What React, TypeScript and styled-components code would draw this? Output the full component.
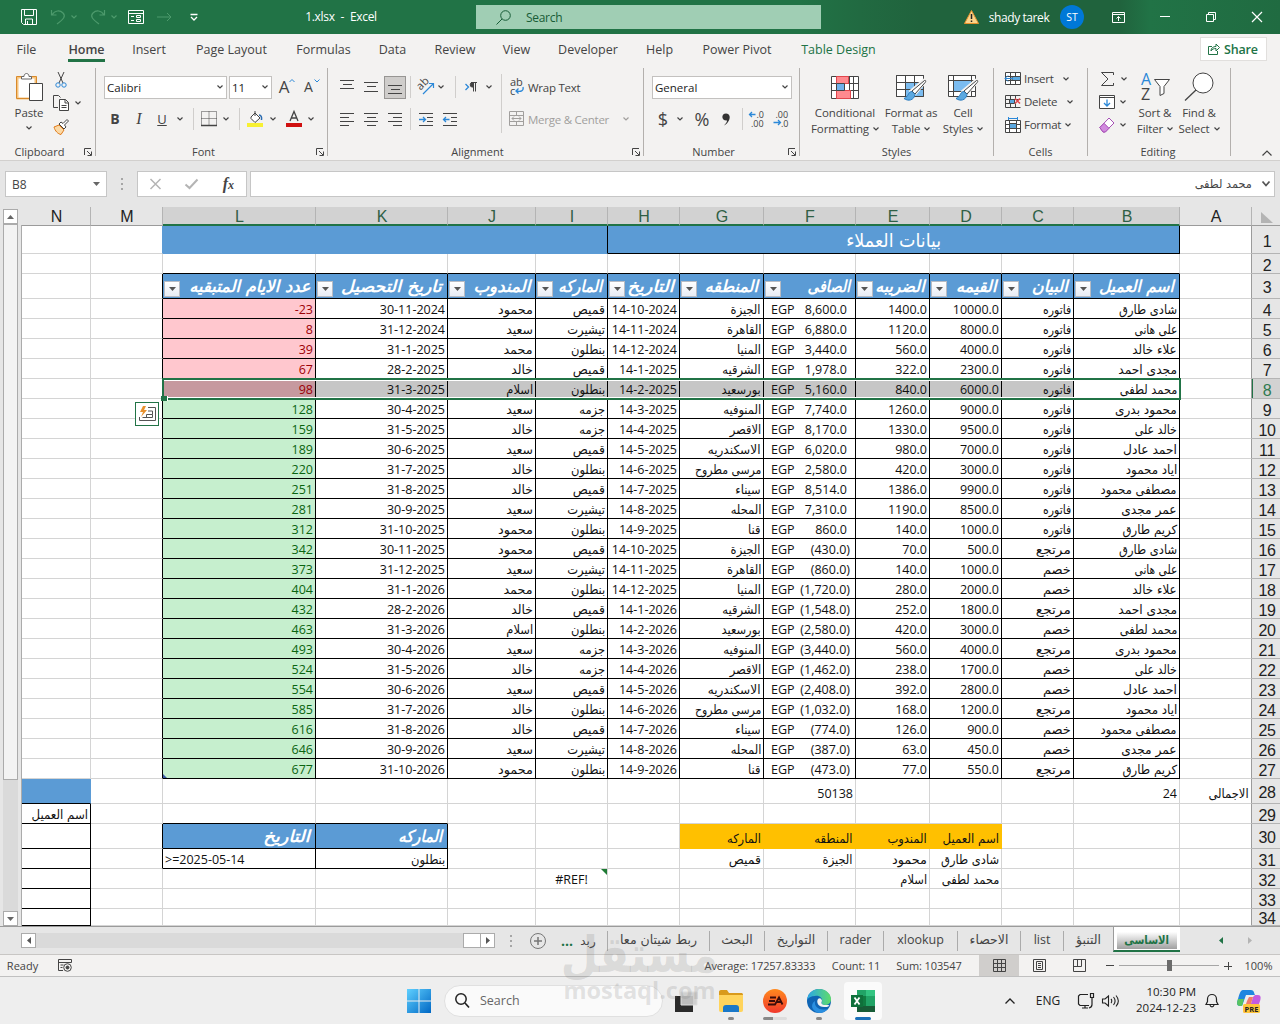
import React from "react";
import styled, { createGlobalStyle, css } from "styled-components";

const GlobalStyle = createGlobalStyle`
  * {
    box-sizing: border-box;
  }
  body {
    margin: 0;
    overflow: hidden;
    background: #e6e6e6;
    color: #444;
    font-family: "Open Sans", "DejaVu Sans", sans-serif;
    font-size: 12px;
  }
  svg {
    display: block;
    flex: none;
    overflow: visible;
  }
`;

const Window = styled.div`
  width: 1280px;
  height: 1024px;
  display: flex;
  flex-direction: column;
  position: relative;
  overflow: hidden;
`;

/* shared pieces */

const Slot = styled.div<{ $w?: number; $ml?: number }>`
  display: flex;
  align-items: center;
  justify-content: center;
  flex: none;
  white-space: nowrap;
  width: ${({ $w }) => ($w ? `${$w}px` : "auto")};
  margin-left: ${({ $ml = 0 }) => $ml}px;
`;

const Arabic = styled.span<{ $x?: number }>`
  display: inline-block;
  direction: rtl;
  font-family: "DejaVu Sans", sans-serif;
  transform: scaleX(${({ $x = 0.92 }) => $x});
  transform-origin: right center;
`;

const Ico = ({ w = 16, h = 16, children, c = "#444" }: any) => (
  <svg
    width={w}
    height={h}
    viewBox={`0 0 ${w} ${h}`}
    fill="none"
    stroke={c}
    strokeWidth="1"
  >
    {children}
  </svg>
);

const Chevron = ({ c = "#444" }: { c?: string }) => (
  <Ico w={6} h={4} c={c}>
    <path d="M.5.5 3 3 5.5.5" strokeWidth="1.2" />
  </Ico>
);

/* title bar */

const TitleBar = styled.header`
  height: 34px;
  flex: none;
  display: flex;
  align-items: center;
  color: #fff;
  background: linear-gradient(
    90deg,
    #217346 0,
    #217346 800px,
    #216a41 860px,
    #20633d 920px,
    #20633d 1120px,
    #217346 1150px,
    #206b41 1280px
  );
`;

const FileName = styled(Slot)`
  font-size: 12px;
  word-spacing: 3px;
  letter-spacing: -0.3px;
  padding-bottom: 2px;
`;

const SearchBox = styled.div`
  width: 345px;
  height: 24px;
  margin-left: 99px;
  padding-left: 20px;
  display: flex;
  align-items: center;
  gap: 15px;
  color: #185c37;
  letter-spacing: -0.3px;
  background: #a0ceb4;
`;

const UserName = styled(Slot)`
  letter-spacing: -0.4px;
`;

const Avatar = styled.div`
  width: 24px;
  height: 24px;
  margin-left: 11px;
  border-radius: 50%;
  background: #0078d7;
  font-size: 10.5px;
  display: flex;
  align-items: center;
  justify-content: center;
`;

const Title = () => (
  <TitleBar>
    <Slot $w={16} $ml={21}>
      <Ico c="#fff">
        <path d="M.5.5h15v15h-13l-2-2zM3.5.5v6h9v-6M4.5 15v-5h7v5M6.500 12v3" />
      </Ico>
    </Slot>
    <Slot $w={15} $ml={14}>
      <Ico w={15} c="#4d9a6c">
        <path d="M.5 1v5h5M1 6C4 1 9 1 12 4s1 6-6 11" strokeWidth="1.2" />
      </Ico>
    </Slot>
    <Slot $w={6} $ml={5}>
      <Chevron c="#4d9a6c" />
    </Slot>
    <Slot $w={15} $ml={13}>
      <Ico w={15} c="#4d9a6c">
        <path d="M14.5 1v5h-5M14 6C11 1 6 1 3 4S2 10 9 15" strokeWidth="1.2" />
      </Ico>
    </Slot>
    <Slot $w={6} $ml={6}>
      <Chevron c="#4d9a6c" />
    </Slot>
    <Slot $w={16} $ml={11}>
      <Ico h={14} c="#fff">
        <path d="M.5.5h15v13H.5zM.5 3.500h15M3 6.500h3M3 10.500h3M8.500 5.500h4v2h-4zM8.500 9.500h4v2h-4z" />
      </Ico>
    </Slot>
    <Slot $w={15} $ml={13}>
      <Ico w={15} h={10} c="#4d9a6c">
        <path d="M0 5h14M10 1l4 4-4 4" />
      </Ico>
    </Slot>
    <Slot $w={8} $ml={18}>
      <Ico w={8} h={7} c="#fff">
        <path d="M.5.5h7M1 3l3 3 3-3" strokeWidth="1.3" />
      </Ico>
    </Slot>
    <FileName $w={72} $ml={107}>
      1.xlsx - Excel
    </FileName>
    <SearchBox>
      <Ico w={15} h={15} c="#185c37">
        <circle cx="9.5" cy="5.5" r="4.8" />
        <path d="M6 9 .5 14.5" />
      </Ico>
      Search
    </SearchBox>
    <Slot $w={15} $ml={143}>
      <Ico w={15} h={14}>
        <path d="M7.5.5 14.5 13.5H.5z" fill="#fcd48a" stroke="#e8912d" />
        <path d="M7.5 4v5M7.5 10.5v1.5" stroke="#222" strokeWidth="1.5" />
      </Ico>
    </Slot>
    <UserName $w={60} $ml={10}>
      shady tarek
    </UserName>
    <Avatar>ST</Avatar>
    <Slot $w={13} $ml={28}>
      <Ico w={13} h={11} c="#fff">
        <path d="M.5.5h12v10H.5zM.5 2.500h12M6.500 9V4.500M4.500 6.500l2-2 2 2" />
      </Ico>
    </Slot>
    <Slot $w={10} $ml={35}>
      <Ico w={10} h={3} c="#fff">
        <path d="M0 .5h10" />
      </Ico>
    </Slot>
    <Slot $w={10} $ml={36}>
      <Ico w={10} h={10} c="#fff">
        <path d="M.5 2.500h7v7h-7zM2.500 2.500v-2h7v7h-2" />
      </Ico>
    </Slot>
    <Slot $w={10} $ml={36}>
      <Ico w={10} h={10} c="#fff">
        <path d="M0 0l10 10M10 0 0 10" strokeWidth="1.2" />
      </Ico>
    </Slot>
  </TitleBar>
);

/* ribbon tabs */

const TabStrip = styled.nav`
  height: 33px;
  flex: none;
  display: flex;
  background: #f3f2f1;
`;

const Tab = styled(Slot)<{ $active?: boolean; $green?: boolean }>`
  height: 28px;
  padding-top: 3px;
  font-size: 12.5px;
  color: ${({ $green }) => ($green ? "#217346" : "#444")};
  ${({ $active }) =>
    $active &&
    css`
      font-weight: 600;
      border-bottom: 3px solid #217346;
      padding-top: 6px;
    `}
`;

const ShareButton = styled.button`
  width: 67px;
  height: 24px;
  margin: 3px 0 0 324px;
  padding: 0 0 0 7px;
  border: 1px solid #e1dfdd;
  background: #fff;
  color: #217346;
  font: 600 12.5px "Open Sans", sans-serif;
  letter-spacing: -0.2px;
  display: flex;
  align-items: center;
  gap: 4px;
`;

const tabs: [string, number, number][] = [
  ["File", 17, 19],
  ["Home", 32, 37],
  ["Insert", 28, 32],
  ["Page Layout", 31, 71],
  ["Formulas", 30, 53],
  ["Data", 29, 27],
  ["Review", 29, 40],
  ["View", 28, 27],
  ["Developer", 28, 60],
  ["Help", 28, 27],
  ["Power Pivot", 30, 68],
  ["Table Design", 30, 75],
];

/* ribbon */

const RibbonBar = styled.section`
  height: 94px;
  flex: none;
  display: flex;
  background: #f3f2f1;
  border-bottom: 1px solid #d2d0ce;
`;

const Group = styled.div<{ $w: number }>`
  width: ${({ $w }) => $w}px;
  height: 88px;
  margin-top: 1px;
  flex: none;
  display: flex;
  flex-direction: column;
  border-right: 1px solid #b3b0ad;
`;

const GroupBody = styled.div`
  height: 76px;
  flex: none;
  display: flex;
`;

const GroupLabel = styled.div<{ $pad?: number }>`
  height: 16px;
  flex: none;
  display: flex;
  align-items: center;
  font-size: 11px;
  span {
    flex: 1;
    text-align: center;
    padding: 0 ${({ $pad = 0 }) => $pad}px 2px 0;
  }
  svg {
    margin: 0 3px 0 0;
  }
`;

const Rows = styled.div<{ $top?: number; $gap?: number; $ml?: number }>`
  display: flex;
  flex-direction: column;
  margin-top: ${({ $top = 8 }) => $top}px;
  gap: ${({ $gap = 10 }) => $gap}px;
  margin-left: ${({ $ml = 0 }) => $ml}px;
`;

const Line = styled.div<{ $h?: number }>`
  height: ${({ $h = 22 }) => $h}px;
  display: flex;
  align-items: center;
`;

const Label = styled(Slot)`
  justify-content: flex-start;
  font-size: 11.5px;
  letter-spacing: -0.25px;
`;

const Combo = styled.div<{ $w: number }>`
  width: ${({ $w }) => $w}px;
  height: 23px;
  padding: 0 3px 0 2px;
  border: 1px solid #c3c1bf;
  background: #fff;
  color: #222;
  font-size: 11.5px;
  display: flex;
  align-items: center;
  justify-content: space-between;
`;

const Divider = styled.i<{ $ml: number; $h?: number }>`
  width: 1px;
  height: ${({ $h = 22 }) => $h}px;
  margin-left: ${({ $ml }) => $ml}px;
  background: #d0cecc;
`;

const Pressed = styled(Slot)`
  height: 23px;
  border: 1px solid #979593;
  background: #cfcdcb;
`;

const Letter = styled(Slot)<{ $size?: number }>`
  font-size: ${({ $size = 14 }) => $size}px;
  line-height: 20px;
  b {
    font-weight: 700;
  }
  i {
    font-family: "Liberation Serif", serif;
    font-size: 16px;
  }
`;

const BigButton = styled.div<{ $w: number; $ml?: number }>`
  width: ${({ $w }) => $w}px;
  margin-left: ${({ $ml = 0 }) => $ml}px;
  flex: none;
  display: flex;
  flex-direction: column;
  align-items: center;
  padding-top: 2px;
  font-size: 11.5px;
  letter-spacing: -0.1px;
  line-height: 16px;
  white-space: nowrap;
  .pic {
    height: 34px;
    margin-bottom: 1px;
    display: flex;
    align-items: center;
  }
  .caption {
    display: flex;
    align-items: center;
    gap: 4px;
    height: 16px;
  }
  .only {
    margin-top: 5px;
  }
`;

const Command = styled(Line)`
  height: 23px;
`;

const Launcher = () => (
  <Ico w={8} h={8}>
    <path d="M.5 7V.5H7M3 3l4 4M7.500 3.500v4h-4" />
  </Ico>
);

const Bars = ({ rows }: { rows: [number, number, number][] }) => (
  <Ico w={15} h={14}>
    {rows.map(([x, y, w]) => (
      <path key={y} d={`M${x} ${y}.5h${w}`} />
    ))}
  </Ico>
);

const TableGrid = ({ children }: any) => (
  <Ico w={30} h={30}>
    <path d="M.5 3.500h27v21H.5z" fill="#fff" />
    {children}
  </Ico>
);

const Brush = () => (
  <g>
    <path
      d="M28 8c2-1 2 1 1 2L19 22l-4-3z"
      fill="#fff"
      stroke="#f3f2f1"
      strokeWidth="3"
    />
    <path d="M28.500 8.500c1.500-.5 1.500.8.8 1.800L19 22l-3-3z" fill="#fff" />
    <path
      d="M16 19.500c-4 0-3 5-8 7 4 3 10 2 11-4z"
      fill="#5ba8e0"
      stroke="#2b7cc0"
    />
  </g>
);

const Muted = styled(Label)`
  color: #a19f9d;
`;

const Collapse = styled.div`
  flex: 1;
  display: flex;
  justify-content: flex-end;
  align-items: flex-end;
  padding: 0 8px 4px 0;
`;

const Ribbon = () => (
  <RibbonBar>
    <Group $w={96}>
      <GroupBody>
        <BigButton $w={44} $ml={7}>
          <div className="pic">
            <Ico w={28} h={30}>
              <path d="M2.500 5.500h18v21h-18z" fill="#fff" stroke="#f6c47e" strokeWidth="2" />
              <path d="M1.500 4.500h20v22h-20z" stroke="#d98a2b" />
              <path d="M6.500 7V4.500h2.500c0-4 5-4 5 0h2.500V7z" fill="#fff" stroke="#666" />
              <path d="M14.500 11.500h13v17h-13z" fill="#fff" />
            </Ico>
          </div>
          <div className="caption">Paste</div>
          <div className="only">
            <Chevron />
          </div>
        </BigButton>
        <Rows $top={0} $gap={0} $ml={1}>
          <Line $h={23}>
            <Slot $w={17}>
              <Ico>
                <path d="M5 0l5 11M11 0 6 11" />
                <circle cx="5" cy="13" r="2.200" stroke="#2b88d8" />
                <circle cx="11" cy="13" r="2.200" stroke="#2b88d8" />
              </Ico>
            </Slot>
          </Line>
          <Line $h={24}>
            <Slot $w={17}>
              <Ico>
                <path d="M5 12.500H.5V.5h5l2 2" />
                <path d="M6.500 4.500h6l3 3v8h-9zM12 4.500V8h3.500M8.500 10.500h5M8.500 12.500h5" fill="#fff" />
              </Ico>
            </Slot>
            <Slot $ml={6}>
              <Chevron />
            </Slot>
          </Line>
          <Line $h={23}>
            <Slot $w={17}>
              <Ico>
                <path d="M1 8l5-2 5 5-3 4.500C5 15 2 12 1 8z" fill="#fbd9a6" stroke="#e07b1a" />
                <path d="M6 5l5 5 2-2-1.500-2L15.500 2 14 .5l-4 4L8 3z" fill="#fff" />
              </Ico>
            </Slot>
          </Line>
        </Rows>
      </GroupBody>
      <GroupLabel $pad={5}>
        <span>Clipboard</span>
        <Launcher />
      </GroupLabel>
    </Group>

    <Group $w={232}>
      <GroupBody>
        <Rows $ml={8}>
          <Line>
            <Combo $w={123}>
              Calibri
              <Chevron />
            </Combo>
            <Slot $ml={2}>
              <Combo $w={43}>
                11
                <Chevron />
              </Combo>
            </Slot>
            <Letter $w={10} $ml={7} $size={17}>
              A
            </Letter>
            <Slot $w={6}>
              <Ico w={6} h={18} c="#2b88d8">
                <path d="M.5 4 3 1.500 5.500 4" />
              </Ico>
            </Slot>
            <Letter $w={9} $ml={9} $size={14}>
              A
            </Letter>
            <Slot $w={6} $ml={1}>
              <Ico w={6} h={18} c="#2b88d8">
                <path d="M.5 1.500 3 4 5.500 1.500" />
              </Ico>
            </Slot>
          </Line>
          <Line>
            <Letter $w={12} $ml={5}>
              <b>B</b>
            </Letter>
            <Letter $w={12} $ml={12}>
              <i>I</i>
            </Letter>
            <Letter $w={12} $ml={11} $size={13}>
              <u>U</u>
            </Letter>
            <Slot $ml={9}>
              <Chevron />
            </Slot>
            <Divider $ml={10} />
            <Slot $ml={7}>
              <Ico>
                <path d="M.5.5h15v14H.5zM8 .5v14M.5 7.500h15" strokeDasharray="1 1" />
                <path d="M0 14.500h16" strokeWidth="1.500" />
              </Ico>
            </Slot>
            <Slot $ml={6}>
              <Chevron />
            </Slot>
            <Divider $ml={10} />
            <Slot $ml={7}>
              <Ico>
                <path d="M4 6l4-4 5 5-5 4.500-4-4zM8 5V0" fill="#fff" />
                <path d="M12 4c2 0 3 2 2.500 5" stroke="#2b6cb0" strokeWidth="1.500" />
                <path d="M0 14h16" stroke="#f7f032" strokeWidth="4" />
              </Ico>
            </Slot>
            <Slot $ml={7}>
              <Chevron />
            </Slot>
            <Slot $ml={10}>
              <Ico>
                <path d="M4 10 8 .5 12 10M5.300 7h5.400" strokeWidth="1.300" />
                <path d="M0 14h16" stroke="#d01010" strokeWidth="4" />
              </Ico>
            </Slot>
            <Slot $ml={6}>
              <Chevron />
            </Slot>
          </Line>
        </Rows>
      </GroupBody>
      <GroupLabel $pad={5}>
        <span>Font</span>
        <Launcher />
      </GroupLabel>
    </Group>

    <Group $w={316}>
      <GroupBody>
        <Rows $ml={12}>
          <Line>
            <Bars rows={[[0, 0, 14], [3, 4, 9], [0, 8, 14]]} />
            <Slot $ml={9}>
              <Bars rows={[[0, 2, 14], [3, 6, 9], [0, 11, 14]]} />
            </Slot>
            <Pressed $w={22} $ml={5}>
              <Bars rows={[[0, 5, 14], [3, 9, 9], [0, 13, 14]]} />
            </Pressed>
            <Divider $ml={4} />
            <Slot $ml={7}>
              <Ico>
                <path d="M5 15 15 5M11 4.500h4.500v4.500" stroke="#2b88d8" strokeWidth="1.200" />
                <text x="-1" y="9" transform="rotate(-45 4 6)" fontSize="11" fill="#444" stroke="none">
                  ab
                </text>
              </Ico>
            </Slot>
            <Slot $ml={4}>
              <Chevron />
            </Slot>
            <Divider $ml={11} />
            <Slot $ml={9}>
              <Ico w={13} h={12}>
                <path d="M.5 3l3 3-3 3" stroke="#2b88d8" strokeWidth="1.300" />
                <path d="M8.500 10.500V1.500M10.500 10.500V1.500M6 1.500h6" />
                <path d="M8.500 1.500H7.500a2.300 2.300 0 000 4.600h1z" fill="#444" />
              </Ico>
            </Slot>
            <Slot $ml={8}>
              <Chevron />
            </Slot>
          </Line>
          <Line>
            <Bars rows={[[0, 1, 14], [0, 5, 9], [0, 9, 14], [0, 13, 9]]} />
            <Slot $ml={9}>
              <Bars rows={[[0, 1, 14], [3, 5, 9], [0, 9, 14], [3, 13, 9]]} />
            </Slot>
            <Slot $ml={9}>
              <Bars rows={[[0, 1, 14], [5, 5, 9], [0, 9, 14], [5, 13, 9]]} />
            </Slot>
            <Divider $ml={7} />
            <Slot $ml={8}>
              <Ico w={15} h={13}>
                <path d="M0 .5h14M8 4.500h6M8 8.500h6M0 12.500h14" />
                <path d="M0 6.500h6M4 4l2.500 2.500L4 9" stroke="#2b88d8" strokeWidth="1.300" />
              </Ico>
            </Slot>
            <Slot $ml={9}>
              <Ico w={15} h={13}>
                <path d="M0 .5h14M8 4.500h6M8 8.500h6M0 12.500h14" />
                <path d="M.5 6.500h6M3 4 .5 6.500 3 9" stroke="#2b88d8" strokeWidth="1.300" />
              </Ico>
            </Slot>
          </Line>
        </Rows>
        <Rows $ml={9} $top={6}>
          <Divider $ml={0} $h={59} />
        </Rows>
        <Rows $ml={7}>
          <Line>
            <Ico>
              <text x="1" y="7" fontSize="11" fill="#444" stroke="none">
                ab
              </text>
              <text x="1" y="16" fontSize="11" fill="#444" stroke="none">
                c
              </text>
              <path d="M14 8c1 4-2 5-7 4M9.500 9.500 7 12l2.500 2.500" stroke="#2b88d8" strokeWidth="1.300" />
            </Ico>
            <Label $w={52} $ml={3}>
              Wrap Text
            </Label>
          </Line>
          <Line>
            <Ico c="#a19f9d">
              <path d="M.5.5h14v14H.5zM.5 4.500h14M.5 10.500h14M7.500.5v4M7.500 10.500v4M3 7.500h9M5 5.500l-2 2 2 2M10 5.500l2 2-2 2" />
            </Ico>
            <Muted $w={85} $ml={3}>
              Merge &amp; Center
            </Muted>
            <Slot $ml={10}>
              <Chevron c="#a19f9d" />
            </Slot>
          </Line>
        </Rows>
      </GroupBody>
      <GroupLabel $pad={5}>
        <span>Alignment</span>
        <Launcher />
      </GroupLabel>
    </Group>

    <Group $w={156}>
      <GroupBody>
        <Rows $ml={8}>
          <Line>
            <Combo $w={140}>
              General
              <Chevron />
            </Combo>
          </Line>
          <Line>
            <Letter $w={12} $ml={5} $size={18}>
              $
            </Letter>
            <Slot $ml={8}>
              <Chevron />
            </Slot>
            <Letter $w={16} $ml={11} $size={18}>
              %
            </Letter>
            <Slot $ml={12}>
              <Ico w={9} h={13}>
                <path d="M4 .5C8 .5 9 5 6 9c-1 2-3 3-4 3.500 2-2 3-3.500 3-5C-1 8-1 .5 4 .5z" fill="#333" stroke="none" />
              </Ico>
            </Slot>
            <Divider $ml={11} />
            <Slot $ml={6}>
              <Ico>
                <path d="M.5 3.500h6M3 1 .5 3.500 3 6" stroke="#2b88d8" strokeWidth="1.300" />
                <text x="7.500" y="7" fontSize="9" fill="#444" stroke="none">.0</text>
                <text x="2" y="15.500" fontSize="9" fill="#444" stroke="none">.00</text>
              </Ico>
            </Slot>
            <Slot $ml={8}>
              <Ico>
                <path d="M.5 11.500h7M5 9l2.500 2.500L5 14" stroke="#2b88d8" strokeWidth="1.300" />
                <text x="2.500" y="7" fontSize="9" fill="#444" stroke="none">.00</text>
                <text x="8" y="15.500" fontSize="9" fill="#444" stroke="none">.0</text>
              </Ico>
            </Slot>
          </Line>
        </Rows>
      </GroupBody>
      <GroupLabel $pad={5}>
        <span>Number</span>
        <Launcher />
      </GroupLabel>
    </Group>

    <Group $w={194}>
      <GroupBody>
        <BigButton $w={72} $ml={9}>
          <div className="pic">
            <Ico w={28} h={23}>
              <path d="M.5.5h27v22H.5z" fill="#fff" />
              <path d="M.5 7.500h27M.5 14.500h27M5.500.5v22M18.500.5v22M22.500.5v22" />
              <path d="M5.500.5h12v7h-12zM5.500 14.500h14v8h-14z" fill="#ff8a8f" stroke="#e0464c" />
              <path d="M5.500 7.500h8v7h-8z" fill="#6fb1ec" />
            </Ico>
          </div>
          <div className="caption">Conditional</div>
          <div className="caption">
            Formatting <Chevron />
          </div>
        </BigButton>
        <BigButton $w={60}>
          <div className="pic">
            <TableGrid>
              <path d="M9.500 10.500h18v14h-18z" fill="#7bbcf0" stroke="none" />
              <path d="M.5 3.500h27v21H.5zM.5 10.500h27M.5 17.500h27M9.500 3.500v21M18.500 3.500v21" />
              <Brush />
            </TableGrid>
          </div>
          <div className="caption">Format as</div>
          <div className="caption">
            Table <Chevron />
          </div>
        </BigButton>
        <BigButton $w={44}>
          <div className="pic">
            <TableGrid>
              <path d="M5.500 8.500h18v11h-18z" fill="#7bbcf0" />
              <path d="M.5 3.500h27M.5 8.500h27M.5 19.500h27M5.500 3.500v21M23.500 3.500v21" />
              <Brush />
            </TableGrid>
          </div>
          <div className="caption">Cell</div>
          <div className="caption">
            Styles <Chevron />
          </div>
        </BigButton>
      </GroupBody>
      <GroupLabel>
        <span>Styles</span>
      </GroupLabel>
    </Group>

    <Group $w={94}>
      <GroupBody>
        <Rows $top={-1} $gap={0} $ml={11}>
          <Command>
            <Ico>
              <path d="M.5 1.500h15v12H.5zM.5 5.500h15M.5 9.500h15M5.500 1.500v12M10.500 1.500v12" fill="#fff" />
              <path d="M7 5.500h8.500v4H7z" fill="#5ba8e0" />
              <path d="M0 7.500h8M3 4.500l-3 3 3 3" stroke="#2b88d8" />
            </Ico>
            <Label $w={29} $ml={3}>Insert</Label>
            <Slot $ml={10}><Chevron /></Slot>
          </Command>
          <Command>
            <Ico>
              <path d="M.5 1.500h15M.5 13.500h15M.5 1.500v12M5.500 1.500v4M10.500 1.500v4M5.500 9.500v4M10.500 9.500v4M.5 5.500h15M.5 9.500h8" />
              <path d="M4.500 5.500h5v4h-5z" fill="#5ba8e0" />
              <path d="M10 4.500l5 5M15 4.500l-5 5" stroke="#e0464c" strokeWidth="1.500" />
            </Ico>
            <Label $w={33} $ml={3}>Delete</Label>
            <Slot $ml={10}><Chevron /></Slot>
          </Command>
          <Command>
            <Ico>
              <path d="M.5 3.500h15v12H.5zM.5 7.500h15M.5 11.500h15M4.500 3.500v12M11.500 3.500v12" fill="#fff" />
              <path d="M4.500 6.500h7v5h-7z" fill="#5ba8e0" />
              <path d="M3.500 0v3M12.500 0v3M3.500 1.500h9" stroke="#2b88d8" />
            </Ico>
            <Label $w={38} $ml={3}>Format</Label>
            <Slot $ml={3}><Chevron /></Slot>
          </Command>
        </Rows>
      </GroupBody>
      <GroupLabel>
        <span>Cells</span>
      </GroupLabel>
    </Group>

    <Group $w={143}>
      <GroupBody>
        <Rows $top={-1} $gap={0} $ml={11}>
          <Command>
            <Slot $w={16}>
              <Ico w={13} h={14}>
                <path d="M12.500 3V.5H.5L7 7 .5 13.500h12V11" />
              </Ico>
            </Slot>
            <Slot $ml={6}><Chevron /></Slot>
          </Command>
          <Command>
            <Ico h={14}>
              <path d="M.5.5h15v13H.5zM.5 2.500h15" fill="#fff" />
              <path d="M8 4.500V11M5 8l3 3 3-3" stroke="#2b88d8" strokeWidth="1.300" />
            </Ico>
            <Slot $ml={5}><Chevron /></Slot>
          </Command>
          <Command>
            <Ico>
              <path d="M.8 10.500 10 1l5 5-9 9H4z" fill="#fff" stroke="#a64fb5" />
              <path d="M.8 10.500 5 6.300l5 5L6.500 15H4z" fill="#d18ade" stroke="#a64fb5" />
            </Ico>
            <Slot $ml={5}><Chevron /></Slot>
          </Command>
        </Rows>
        <BigButton $w={44} $ml={6}>
          <div className="pic">
            <Ico w={29} h={28}>
              <text x="0" y="12" fontSize="16" fill="#2b88d8" stroke="none">A</text>
              <text x="0" y="27" fontSize="16" fill="#444" stroke="none">Z</text>
              <path d="M13.500 6.500h15l-5.500 7v7l-4 2v-9z" fill="#fff" />
            </Ico>
          </div>
          <div className="caption">Sort &amp;</div>
          <div className="caption">
            Filter <Chevron />
          </div>
        </BigButton>
        <BigButton $w={44}>
          <div className="pic">
            <Ico w={30} h={30}>
              <circle cx="19" cy="11" r="10" fill="#fff" />
              <path d="M12 18 1 28.500" strokeWidth="1.300" />
            </Ico>
          </div>
          <div className="caption">Find &amp;</div>
          <div className="caption">
            Select <Chevron />
          </div>
        </BigButton>
      </GroupBody>
      <GroupLabel $pad={2}>
        <span>Editing</span>
      </GroupLabel>
    </Group>
    <Collapse>
      <Ico w={10} h={6}>
        <path d="M.5 5.500 5 1l4.500 4.500" strokeWidth="1.200" />
      </Ico>
    </Collapse>
  </RibbonBar>
);

/* formula bar */

const FormulaBar = styled.div`
  height: 46px;
  flex: none;
  display: flex;
  align-items: flex-start;
  padding-top: 10px;
  background: #e6e6e6;
`;

const Field = styled.div<{ $w: number; $ml: number }>`
  width: ${({ $w }) => $w}px;
  height: 26px;
  margin-left: ${({ $ml }) => $ml}px;
  padding: 0 6px;
  border: 1px solid #c6c6c6;
  background: #fff;
  display: flex;
  align-items: center;
  justify-content: space-between;
`;

const FormulaTools = styled(Field)`
  padding: 0 12px;
`;

const FormulaInput = styled(Field)`
  justify-content: flex-end;
  gap: 10px;
  padding: 0 4px;
`;

const Grip = styled.div<{ $ml: number }>`
  width: 2px;
  height: 26px;
  margin-left: ${({ $ml }) => $ml}px;
  display: flex;
  flex-direction: column;
  justify-content: center;
  gap: 3px;
  &::before,
  &::after,
  i {
    content: "";
    height: 2px;
    background: #a6a6a6;
  }
`;

const Fx = styled.span`
  font: italic bold 16px "Liberation Serif", serif;
  small {
    font-size: 12px;
  }
`;

/* sheet */

const SheetArea = styled.div`
  height: 720px;
  flex: none;
  display: flex;
  border-bottom: 1px solid #9b9b9b;
`;

const VScroll = styled.div`
  width: 22px;
  padding: 2px 4px 0 3px;
  display: flex;
  flex-direction: column;
  background: linear-gradient(#ababab, #ababab) right bottom / 1px 701px
    no-repeat;
`;

const ScrollButton = styled.div`
  width: 15px;
  height: 15px;
  flex: none;
  display: flex;
  align-items: center;
  justify-content: center;
  border: 1px solid #ababab;
  background: #fff;
`;

const VThumb = styled.div`
  height: 556px;
  border: 1px solid #ababab;
  background: #f3f3f3;
`;

const VTrack = styled.div`
  flex: 1;
  background: #dadada;
`;

const Grid = styled.div`
  position: relative;
  display: grid;
  grid-template-columns: 69px 72px 153px 132px 88px 72px 72px 84px 92px 74px 72px 72px 106px 72px 28px;
  grid-template-rows: 19px 28px 20px 25px repeat(24, 20px) 25px 20px 25px repeat(3, 20px) 17px;
`;

const ColHead = styled.div<{ $on?: boolean }>`
  display: flex;
  align-items: center;
  justify-content: center;
  font: 16px "Liberation Sans", sans-serif;
  padding: 2px 0 0 1px;
  color: ${({ $on }) => ($on ? "#2f5f45" : "#222")};
  background: ${({ $on }) => ($on ? "#d2d2d2" : "#e6e6e6")};
  border-right: 1px solid #b4b4b4;
  border-bottom: ${({ $on }) =>
    $on ? "2px solid #217346" : "1px solid #9b9b9b"};
`;

const Corner = styled(ColHead)`
  border-right: 0;
`;

const RowHead = styled.div<{ $on?: boolean }>`
  display: flex;
  align-items: center;
  justify-content: center;
  padding: 3px 0 0 2px;
  font: 16px/17px "Liberation Sans", sans-serif;
  letter-spacing: -0.3px;
  overflow: hidden;
  color: ${({ $on }) => ($on ? "#2f7a50" : "#222")};
  background: ${({ $on }) => ($on ? "#d2d2d2" : "#e6e6e6")};
  border-bottom: 1px solid #b4b4b4;
  box-shadow: ${({ $on }) => ($on ? "inset 1px 0 #217346" : "none")};
`;

type CellProps = {
  $bg?: string;
  $fg?: string;
  $right: string;
  $bottom: string;
  $align?: string;
  $span?: number;
  $low?: boolean;
};

const Cell = styled.div<CellProps>`
  position: relative;
  display: flex;
  align-items: center;
  justify-content: ${({ $align = "flex-end" }) => $align};
  grid-column: span ${({ $span = 1 }) => $span};
  min-width: 0;
  padding: ${({ $low }) => ($low ? "5px" : "1px")} 2px 0;
  white-space: nowrap;
  font-size: 12.5px;
  line-height: 17px;
  color: ${({ $fg = "#111" }) => $fg};
  background: ${({ $bg = "#fff" }) => $bg};
  border-right: 1px solid ${({ $right }) => $right};
  border-bottom: 1px solid ${({ $bottom }) => $bottom};
`;

const HeadText = styled(Arabic)`
  font-size: 16.5px;
  line-height: 20px;
  font-weight: bold;
  font-style: italic;
  padding-right: 3px;
  margin-top: 1px;
`;

const FilterButton = styled.span`
  width: 16px;
  height: 16px;
  margin: 4px auto 0 -1px;
  flex: none;
  display: flex;
  align-items: center;
  justify-content: center;
  border: 1px solid #b8bcc4;
  background: linear-gradient(#fff, #e8ecf4);
`;

const Money = styled.span<{ $neg: boolean }>`
  flex: 1;
  display: flex;
  justify-content: space-between;
  padding: 0 ${({ $neg }) => ($neg ? 3 : 6)}px 0 5px;
`;

const ErrorMark = styled.i`
  position: absolute;
  top: 0;
  right: 0;
  border-top: 6px solid #1e7b34;
  border-left: 6px solid transparent;
`;

const TableMark = styled.i`
  position: absolute;
  left: 0;
  bottom: 0;
  border-bottom: 4px solid #3b5ba5;
  border-right: 4px solid transparent;
`;

const Selection = styled.div`
  position: absolute;
  left: 140px;
  top: 171px;
  width: 1019px;
  height: 22px;
  border: 2px solid #217346;
  box-shadow: inset 0 1px #fff, inset 0 -1px #fff;
  &::after {
    content: "";
    position: absolute;
    left: -3px;
    bottom: -3px;
    width: 6px;
    height: 5px;
    background: #217346;
    border-right: 1px solid #fff;
  }
`;

const QuickTag = styled.div`
  position: absolute;
  left: 113px;
  top: 195px;
  width: 24px;
  height: 24px;
  display: flex;
  align-items: center;
  justify-content: center;
  border: 1px solid #217346;
  background: #fff;
`;

const COLS = ["N", "M", "L", "K", "J", "I", "H", "G", "F", "E", "D", "C", "B", "A"];

// columns B..L, as typed in the sheet
const DATA: string[][] = [
  ["شادى طارق", "فاتوره", "10000.0", "1400.0", "8,600.0", "الجيزة", "14-10-2024", "قميص", "محمود", "30-11-2024", "-23"],
  ["على هانى", "فاتوره", "8000.0", "1120.0", "6,880.0", "القاهرة", "14-11-2024", "تيشيرت", "سعيد", "31-12-2024", "8"],
  ["علاء خالد", "فاتوره", "4000.0", "560.0", "3,440.0", "المنيا", "14-12-2024", "بنطلون", "محمد", "31-1-2025", "39"],
  ["مجدى احمد", "فاتوره", "2300.0", "322.0", "1,978.0", "الشرقيه", "14-1-2025", "قميص", "خالد", "28-2-2025", "67"],
  ["محمد لطفى", "فاتوره", "6000.0", "840.0", "5,160.0", "بورسعيد", "14-2-2025", "بنطلون", "اسلام", "31-3-2025", "98"],
  ["محمود بدرى", "فاتوره", "9000.0", "1260.0", "7,740.0", "المنوفيه", "14-3-2025", "جزمه", "سعيد", "30-4-2025", "128"],
  ["خالد على", "فاتوره", "9500.0", "1330.0", "8,170.0", "الاقصر", "14-4-2025", "جزمه", "خالد", "31-5-2025", "159"],
  ["احمد عادل", "فاتوره", "7000.0", "980.0", "6,020.0", "الاسكندريه", "14-5-2025", "قميص", "سعيد", "30-6-2025", "189"],
  ["اياد محمود", "فاتوره", "3000.0", "420.0", "2,580.0", "مرسى مطروح", "14-6-2025", "بنطلون", "خالد", "31-7-2025", "220"],
  ["مصطفى محمود", "فاتوره", "9900.0", "1386.0", "8,514.0", "سيناء", "14-7-2025", "قميص", "خالد", "31-8-2025", "251"],
  ["عمر مجدى", "فاتوره", "8500.0", "1190.0", "7,310.0", "المحله", "14-8-2025", "تيشيرت", "سعيد", "30-9-2025", "281"],
  ["كريم طارق", "فاتوره", "1000.0", "140.0", "860.0", "قنا", "14-9-2025", "بنطلون", "محمود", "31-10-2025", "312"],
  ["شادى طارق", "مرتجع", "500.0", "70.0", "(430.0)", "الجيزة", "14-10-2025", "قميص", "محمود", "30-11-2025", "342"],
  ["على هانى", "خصم", "1000.0", "140.0", "(860.0)", "القاهرة", "14-11-2025", "تيشيرت", "سعيد", "31-12-2025", "373"],
  ["علاء خالد", "خصم", "2000.0", "280.0", "(1,720.0)", "المنيا", "14-12-2025", "بنطلون", "محمد", "31-1-2026", "404"],
  ["مجدى احمد", "مرتجع", "1800.0", "252.0", "(1,548.0)", "الشرقيه", "14-1-2026", "قميص", "خالد", "28-2-2026", "432"],
  ["محمد لطفى", "خصم", "3000.0", "420.0", "(2,580.0)", "بورسعيد", "14-2-2026", "بنطلون", "اسلام", "31-3-2026", "463"],
  ["محمود بدرى", "مرتجع", "4000.0", "560.0", "(3,440.0)", "المنوفيه", "14-3-2026", "جزمه", "سعيد", "30-4-2026", "493"],
  ["خالد على", "خصم", "1700.0", "238.0", "(1,462.0)", "الاقصر", "14-4-2026", "جزمه", "خالد", "31-5-2026", "524"],
  ["احمد عادل", "خصم", "2800.0", "392.0", "(2,408.0)", "الاسكندريه", "14-5-2026", "قميص", "سعيد", "30-6-2026", "554"],
  ["اياد محمود", "مرتجع", "1200.0", "168.0", "(1,032.0)", "مرسى مطروح", "14-6-2026", "بنطلون", "خالد", "31-7-2026", "585"],
  ["مصطفى محمود", "خصم", "900.0", "126.0", "(774.0)", "سيناء", "14-7-2026", "قميص", "خالد", "31-8-2026", "616"],
  ["عمر مجدى", "خصم", "450.0", "63.0", "(387.0)", "المحله", "14-8-2026", "تيشيرت", "سعيد", "30-9-2026", "646"],
  ["كريم طارق", "مرتجع", "550.0", "77.0", "(473.0)", "قنا", "14-9-2026", "بنطلون", "محمود", "31-10-2026", "677"],
];

const HEADS: [string, number][] = [
  ["اسم العميل", 0.94],
  ["البيان", 0.98],
  ["القيمه", 0.98],
  ["الضريبه", 0.96],
  ["الصافى", 0.84],
  ["المنطقه", 0.97],
  ["التاريخ", 1.08],
  ["الماركه", 0.9],
  ["المندوب", 1.01],
  ["تاريخ التحصيل", 1.05],
  ["عدد الايام المتبقيه", 0.99],
];

// horizontal stretch of words that need more or less than the usual 0.92
const STRETCH: Record<string, number> = {
  "على هانى": 0.85,
  "علاء خالد": 0.95,
  "مجدى احمد": 0.98,
  "محمد لطفى": 0.91,
  "محمود بدرى": 0.97,
  "خالد على": 0.88,
  "احمد عادل": 0.98,
  "اياد محمود": 0.95,
  "عمر مجدى": 0.98,
  "كريم طارق": 0.94,
  "الاسكندريه": 0.97,
  "مرسى مطروح": 0.87,
  "فاتوره": 0.88,
  "قميص": 1,
  "محمود": 1.03,
  "سعيد": 1,
  "محمد": 1.02,
  "خالد": 0.99,
  "خصم": 1.04,
  "مرتجع": 1.1,
  "اسم العميل": 0.94,
};

// everything outside the main table
const EXTRA: Record<string, string> = {
  A28: "الاجمالى",
  B28: "24",
  F28: "50138",
  N29: "اسم العميل",
  D30: "اسم العميل",
  E30: "المندوب",
  F30: "المنطقه",
  G30: "الماركه",
  K30: "الماركه",
  L30: "التاريخ",
  D31: "شادى طارق",
  E31: "محمود",
  F31: "الجيزة",
  G31: "قميص",
  K31: "بنطلون",
  L31: ">=2025-05-14",
  D32: "محمد لطفى",
  E32: "اسلام",
  I32: "#REF!",
};

const BLUE = "#5b9bd5";
const LINE = "#d4d4d4";
const inTable = (col: string) => col >= "B" && col <= "L";
const isArabic = (s: string) => /[\u0600-\u06ff]/.test(s);

const boxed = (row: number, col?: string) => {
  if (!col) return false;
  if (row >= 3 && row <= 27) return inTable(col);
  if (row === 1) return col >= "B" && col <= "H";
  if (col === "N") return row >= 29;
  return (row === 30 || row === 31) && (col === "K" || col === "L");
};

const fillOf = (row: number, col: string) => {
  if (row === 3 && inTable(col)) return BLUE;
  if (row === 8 && inTable(col) && col !== "B")
    return col === "L" ? "#c6999f" : "#c6c6c6";
  if (row >= 4 && row <= 27 && col === "L")
    return row < 8 ? "#ffc7ce" : "#c6efce";
  if (row === 28 && col === "N") return BLUE;
  if (row === 30 && (col === "K" || col === "L")) return BLUE;
  if (row === 30 && col >= "D" && col <= "G") return "#ffc000";
  return "#fff";
};

const textColor = (row: number, col: string) => {
  if (row === 3 || (row === 30 && col >= "K")) return "#fff";
  if (col !== "L" || row < 4 || row > 27) return "#111";
  return row <= 8 ? "#9c0006" : "#0a6410";
};

const CellContent = ({ row, col }: { row: number; col: string }) => {
  const at = col.charCodeAt(0) - 66;
  if (row === 3 && inTable(col)) {
    return (
      <>
        <FilterButton>
          <Ico w={7} h={4}>
            <path d="M0 0h7L3.500 4z" fill="#555" stroke="none" />
          </Ico>
        </FilterButton>
        <HeadText $x={HEADS[at][1]}>{HEADS[at][0]}</HeadText>
      </>
    );
  }
  const value =
    row >= 4 && row <= 27 && inTable(col)
      ? DATA[row - 4][at]
      : EXTRA[col + row];
  if (!value) return null;
  if (row === 30 && (col === "K" || col === "L"))
    return <HeadText $x={col === "L" ? 1.08 : 0.9}>{value}</HeadText>;
  if (isArabic(value)) return <Arabic $x={STRETCH[value]}>{value}</Arabic>;
  if (col === "F" && row < 28)
    return (
      <Money $neg={value[0] === "("}>
        <span>EGP</span>
        <span>{value}</span>
      </Money>
    );
  return <>{value}</>;
};

const alignOf = (key: string) => {
  if (key === "L31") return "flex-start";
  if (key === "I32") return "center";
  return "flex-end";
};

const BigTitle = styled(Arabic)`
  font-size: 19px;
  line-height: 22px;
  margin-bottom: 1px;
  transform-origin: center;
`;

const SheetRow = ({ row }: { row: number }) => (
  <>
    {row === 1 ? (
      <>
        <Cell $right={LINE} $bottom={LINE} />
        <Cell $right={BLUE} $bottom={LINE} />
        <Cell $span={4} $bg={BLUE} $right="#000" $bottom={BLUE} />
        <Cell $span={7} $bg={BLUE} $fg="#fff" $right="#000" $bottom="#000" $align="center">
          <BigTitle>بيانات العملاء</BigTitle>
        </Cell>
        <Cell $right="#9b9b9b" $bottom={LINE} />
      </>
    ) : (
      COLS.map((col, i) => {
        const bg = fillOf(row, col);
        const yellow = bg === "#ffc000";
        let right = LINE;
        if (boxed(row, col) || boxed(row, COLS[i + 1])) right = "#000";
        else if (col === "A") right = "#9b9b9b";
        else if (yellow || (row === 28 && col === "N")) right = bg;
        let bottom = LINE;
        if (boxed(row, col) || boxed(row + 1, col)) bottom = "#000";
        else if (yellow) bottom = bg;
        return (
          <Cell
            key={col}
            $bg={bg}
            $fg={textColor(row, col)}
            $right={right}
            $bottom={bottom}
            $align={alignOf(col + row)}
            $low={row === 28 || yellow}
          >
            <CellContent row={row} col={col} />
            {col + row === "I32" && <ErrorMark />}
            {col + row === "L27" && <TableMark />}
          </Cell>
        );
      })
    )}
    <RowHead $on={row === 8}>{row}</RowHead>
  </>
);

const Sheet = () => (
  <SheetArea>
    <VScroll>
      <ScrollButton>
        <Ico w={7} h={4}>
          <path d="M0 4h7L3.500 0z" fill="#666" stroke="none" />
        </Ico>
      </ScrollButton>
      <VThumb />
      <VTrack />
      <ScrollButton>
        <Ico w={7} h={4}>
          <path d="M0 0h7L3.500 4z" fill="#666" stroke="none" />
        </Ico>
      </ScrollButton>
    </VScroll>
    <Grid>
      {COLS.map((col) => (
        <ColHead key={col} $on={inTable(col)}>
          {col}
        </ColHead>
      ))}
      <Corner>
        <Ico w={12} h={11}>
          <path d="M0 0v11h12z" fill="#b4b4b4" stroke="none" />
        </Ico>
      </Corner>
      {Array.from({ length: 34 }, (_, i) => (
        <SheetRow key={i} row={i + 1} />
      ))}
      <Selection />
      <QuickTag>
        <Ico w={17} h={16} c="#555">
          <path d="M9 1.500h7.500v13H.5V11M3.500 11.500h10v-3h-6v3M9 5h4.500v3.500" />
          <path d="M4 0 1 6h3L2 11l6-7H5l2-4z" fill="#e8912d" stroke="none" />
        </Ico>
      </QuickTag>
    </Grid>
  </SheetArea>
);

/* sheet tabs */

const SheetTabs = styled.div`
  height: 27px;
  flex: none;
  display: flex;
  align-items: center;
  padding: 0 0 0 21px;
  background: #e6e6e6;
`;

const HTrack = styled.div`
  width: 427px;
  height: 15px;
  background: #dadada;
`;

const HThumb = styled.div`
  width: 17px;
  height: 15px;
  border: 1px solid #ababab;
  border-right: 0;
  background: #fff;
`;

const SheetTab = styled(Slot)`
  height: 20px;
  font-size: 12.5px;
  padding-bottom: 2px;
  border-left: 1px solid #ababab;
`;

const ActiveTab = styled(Slot)`
  height: 25px;
  padding: 3px 3px 1px;
  align-items: stretch;
  align-self: flex-start;
  background: #fff;
  border-left: 1px solid #9b9b9b;
  border-bottom: 2px solid #217346;
  color: #217346;
  font-weight: bold;
  div {
    flex: 1;
    display: flex;
    align-items: center;
    justify-content: center;
    background: linear-gradient(#fff 10%, #a0a0a0);
  }
`;

const Dots = styled(Slot)`
  color: #217346;
  font-weight: bold;
  font-size: 14px;
`;

const CenterArabic = styled(Arabic)`
  transform-origin: center;
`;

const sheetNames: [string, number][] = [
  ["ربط شيتان معا", 102],
  ["البحث", 55],
  ["التواريخ", 63],
  ["rader", 56],
  ["xlookup", 74],
  ["الاحصاء", 63],
  ["list", 43],
  ["التنبؤ", 50],
];

const BottomTabs = () => (
  <SheetTabs>
    <ScrollButton>
      <Ico w={4} h={7}>
        <path d="M4 0v7L0 3.500z" fill="#555" stroke="none" />
      </Ico>
    </ScrollButton>
    <HTrack />
    <HThumb />
    <ScrollButton>
      <Ico w={4} h={7}>
        <path d="M0 0v7l4-3.500z" fill="#555" stroke="none" />
      </Ico>
    </ScrollButton>
    <Grip $ml={15}>
      <i />
    </Grip>
    <Slot $w={16} $ml={18}>
      <Ico c="#777">
        <circle cx="8" cy="8" r="7.500" />
        <path d="M8 4v8M4 8h8" strokeWidth="1.500" />
      </Ico>
    </Slot>
    <Dots $w={12} $ml={15}>
      ...
    </Dots>
    <Slot $w={16} $ml={7}>
      <CenterArabic $x={1}>ربد</CenterArabic>
    </Slot>
    <Slot $w={11} />
    {sheetNames.map(([name, w]) => (
      <SheetTab key={name} $w={w}>
        {isArabic(name) ? <CenterArabic $x={1}>{name}</CenterArabic> : name}
      </SheetTab>
    ))}
    <ActiveTab $w={67}>
      <div>
        <CenterArabic $x={0.84}>الاساسى</CenterArabic>
      </div>
    </ActiveTab>
    <Slot $w={4} $ml={39}>
      <Ico w={4} h={7}>
        <path d="M4 0v7L0 3.500z" fill="#217346" stroke="none" />
      </Ico>
    </Slot>
    <Slot $w={4} $ml={25}>
      <Ico w={4} h={7}>
        <path d="M0 0v7l4-3.500z" fill="#b4b4b4" stroke="none" />
      </Ico>
    </Slot>
  </SheetTabs>
);

/* status bar */

const StatusBar = styled.div`
  height: 23px;
  flex: none;
  display: flex;
  align-items: center;
  font-size: 11px;
  background: #f3f2f1;
  border-top: 1px solid #c8c6c4;
  border-bottom: 1px solid #c0c0c0;
`;

const Stat = styled(Slot)`
  letter-spacing: -0.1px;
`;

const ViewButton = styled(Slot)<{ $on?: boolean }>`
  height: 21px;
  background: ${({ $on }) => ($on ? "#d0cecc" : "transparent")};
`;

const ZoomTrack = styled.div`
  width: 100px;
  height: 11px;
  margin-left: 5px;
  display: flex;
  justify-content: center;
  background: linear-gradient(#a6a6a6, #a6a6a6) center / 100% 1px no-repeat;
  &::after {
    content: "";
    width: 5px;
    background: #6b6b6b;
  }
`;

const Status = () => (
  <StatusBar>
    <Slot $w={31} $ml={7}>
      Ready
    </Slot>
    <Slot $ml={20}>
      <Ico w={14} h={13}>
        <path d="M5 11.500H.5V.5h13v3M.5 3.500h13M2.500 6h3M2.500 8.500h2" />
        <circle cx="9.500" cy="8.500" r="3.800" />
        <circle cx="9.500" cy="8.500" r="1.500" fill="#444" />
      </Ico>
    </Slot>
    <Stat $w={110} $ml={633}>
      Average: 17257.83333
    </Stat>
    <Stat $w={50} $ml={16}>
      Count: 11
    </Stat>
    <Stat $w={64} $ml={16}>
      Sum: 103547
    </Stat>
    <ViewButton $w={40} $ml={18} $on>
      <Ico w={13} h={13}>
        <path d="M.5.5h12v12H.5zM.5 4.500h12M.5 8.500h12M4.500.5v12M8.500.5v12" />
      </Ico>
    </ViewButton>
    <ViewButton $w={40}>
      <Ico w={13} h={13}>
        <path d="M.5.5h12v12H.5zM3.500 2.500h6v8h-6zM5 4.500h3M5 6.500h3M5 8.500h3" />
      </Ico>
    </ViewButton>
    <ViewButton $w={40}>
      <Ico w={13} h={13}>
        <path d="M.5.5h12v12H.5zM.5 7.500h8v-7M4.500.5v7" />
      </Ico>
    </ViewButton>
    <Slot $w={9} $ml={6}>
      <Ico w={8} h={3}>
        <path d="M0 1.500h8" />
      </Ico>
    </Slot>
    <ZoomTrack />
    <Slot $w={8} $ml={5}>
      <Ico w={8} h={8}>
        <path d="M0 4.500h8M4.500 0v8" />
      </Ico>
    </Slot>
    <Slot $w={27} $ml={13}>
      100%
    </Slot>
  </StatusBar>
);

/* taskbar */

const TaskbarRoot = styled.footer`
  flex: 1;
  display: flex;
  align-items: center;
  color: #222;
  background: #eee;
`;

const SearchPill = styled.div`
  width: 219px;
  height: 32px;
  margin-left: 13px;
  padding-left: 10px;
  display: flex;
  align-items: center;
  gap: 11px;
  border-radius: 16px;
  border: 1px solid #e0e0e0;
  background: #fafafa;
  font-size: 12.5px;
  color: #666;
`;

const TaskApp = styled(Slot)<{ $mark?: string; $markW?: number }>`
  position: relative;
  height: 38px;
  &::after {
    content: "";
    position: absolute;
    bottom: 0;
    width: ${({ $markW = 6 }) => $markW}px;
    height: 3px;
    border-radius: 2px;
    background: ${({ $mark = "transparent" }) => $mark};
  }
`;

const ActiveApp = styled(TaskApp)`
  border-radius: 4px;
  background: #fbfbfb;
`;

const Clock = styled.div`
  width: 65px;
  margin-left: 13px;
  text-align: right;
  line-height: 16px;
  font-size: 11.5px;
  padding: 0 1px 1px 0;
`;

const Taskbar = () => (
  <TaskbarRoot>
    <Slot $w={24} $ml={407}>
      <svg width="24" height="24" viewBox="0 0 24 24">
        <defs>
          <linearGradient id="win" x1="0" y1="0" x2="1" y2="1">
            <stop offset="0" stopColor="#5fd0ff" />
            <stop offset="1" stopColor="#0067c4" />
          </linearGradient>
        </defs>
        <path d="M0 0h11.500v11.500H0zM12.500 0H24v11.500H12.500zM0 12.500h11.500V24H0zM12.500 12.500H24V24H12.500z" fill="url(#win)" />
      </svg>
    </Slot>
    <SearchPill>
      <Ico w={14} h={15} c="#222">
        <circle cx="6" cy="6" r="5.200" strokeWidth="1.500" />
        <path d="M10 10l4 4.500" strokeWidth="1.700" />
      </Ico>
      Search
    </SearchPill>
    <TaskApp $w={24} $ml={11}>
      <Ico w={24} h={20}>
        <path d="M1 5h18v16H1z" fill="#2a2a2a" stroke="none" />
        <path d="M7 1h16v13H7z" fill="#ccc" fillOpacity="0.9" stroke="#ddd" />
      </Ico>
    </TaskApp>
    <TaskApp $w={24} $ml={21} $mark="#888">
      <Ico w={24} h={22}>
        <path d="M0 2c0-1 .5-2 2-2h6l2 3h12c1.500 0 2 .5 2 2v15H0z" fill="#d99a1c" stroke="none" />
        <path d="M0 5h24v15c0 1-.5 2-2 2H2c-1.500 0-2-1-2-2z" fill="#ffd45c" stroke="none" />
        <path d="M4 22v-4c0-2 1-3 3-3h10c2 0 3 1 3 3v4z" fill="#1a78c8" stroke="none" />
      </Ico>
    </TaskApp>
    <TaskApp $w={24} $ml={20} $mark="linear-gradient(90deg, #888 42%, #ddd 42%)" $markW={24}>
      <svg width="24" height="24" viewBox="0 0 24 24">
        <defs>
          <linearGradient id="ea" x1="0" y1="0" x2="0" y2="1">
            <stop offset="0" stopColor="#ff8a1e" />
            <stop offset="1" stopColor="#f0382c" />
          </linearGradient>
        </defs>
        <circle cx="12" cy="12" r="12" fill="url(#ea)" />
        <path d="M7 8.500h6M6 12h6M5 15.500h7l4-7 3.500 7M14.500 13h4" fill="none" stroke="#3a0d0a" strokeWidth="1.800" />
      </svg>
    </TaskApp>
    <TaskApp $w={24} $ml={20} $mark="#888">
      <svg width="24" height="24" viewBox="0 0 24 24">
        <defs>
          <linearGradient id="edge" x1="0" y1="0" x2="1" y2="0">
            <stop offset="0" stopColor="#2aa6e8" />
            <stop offset="1" stopColor="#5fdc6a" />
          </linearGradient>
        </defs>
        <circle cx="12" cy="12" r="12" fill="#0f64b4" />
        <path d="M0 11C1 4 6 0 12 0c7 0 12 5 12 10 0 4-3 6-6 6-3 0-4-1-3-3 1-4-3-7-7-6-4 0-7 2-8 4z" fill="url(#edge)" />
        <path d="M8 12c-1 6 4 10 13 8-2 2-5 4-9 4-6-1-10-8-4-12z" fill="#2a8fe0" />
        <path d="M11 10c-2 3 0 8 6 8 2 0 4 0 5-1 1-1-1-1-3-1-5 0-5-2-4-4 0-2-2-4-4-2z" fill="#f2f2f2" />
      </svg>
    </TaskApp>
    <ActiveApp $w={38} $ml={13} $mark="#1a6fb8" $markW={16}>
      <Ico w={24} h={22}>
        <path d="M6 0h18v22H6z" fill="#21a366" stroke="none" />
        <path d="M6 6h9v10H6z" fill="#107c41" stroke="none" />
        <path d="M15 0h9v6h-9z" fill="#33c481" stroke="none" />
        <path d="M6 16h18v6H6z" fill="#185c37" stroke="none" />
        <path d="M0 5h12v12H0z" fill="#0f703b" stroke="none" />
        <path d="M3.500 7.500l5 7M8.500 7.500l-5 7" stroke="#fff" strokeWidth="1.800" />
      </Ico>
    </ActiveApp>
    <Slot $w={10} $ml={123}>
      <Ico w={10} h={6} c="#222">
        <path d="M.5 5.500 5 1l4.500 4.500" strokeWidth="1.300" />
      </Ico>
    </Slot>
    <Slot $w={24} $ml={21}>
      ENG
    </Slot>
    <Slot $w={17} $ml={18}>
      <Ico w={17} h={16} c="#222">
        <path d="M10 1.500H2L.500 3v8l1.500 1.500h9M4 15h6M7 12.500V15M12.500.5h3v4h-3zM14 4.500v7c0 2-1 3-3 3.500" strokeWidth="1.200" />
      </Ico>
    </Slot>
    <Slot $w={17} $ml={7}>
      <Ico w={17} h={14} c="#222">
        <path d="M.5 5v4h2.500L6.500 12V2L3 5zM9 5c1 1 1 3 0 4M11.500 3c2 2.500 2 5.500 0 8M14 1.500c3 3.500 3 7.500 0 11" strokeWidth="1.100" />
      </Ico>
    </Slot>
    <Clock>
      10:30 PM
      <br />
      2024-12-23
    </Clock>
    <Slot $w={14} $ml={8}>
      <Ico w={14} h={15} c="#222">
        <path d="M1 11.500h12l-1.500-3V6c0-6-9-6-9 0v2.500zM5 12c.5 2.500 3.500 2.500 4 0" strokeWidth="1.200" />
      </Ico>
    </Slot>
    <Slot $w={24} $ml={18}>
      <svg width="24" height="24" viewBox="0 0 24 24">
        <path d="M6 1h8c3 0 3 3 4 5H9L5 17H3c-4 0-3-4-2-7S3 1 6 1z" fill="#1f86e0" />
        <path d="M1 10h6L5 17H3c-4 0-3-4-2-7z" fill="#58c560" />
        <path d="M18 6h3c3 0 3 3 2 6l-2 6h-8l3-10z" fill="#c45be0" />
        <path d="M16 8l-3 10H8l2-6 2-4z" fill="#f2796a" />
        <rect x="6" y="15" width="17" height="9" rx="1.500" fill="#ffc53a" />
        <text x="14.500" y="22.500" fontSize="7.500" fontWeight="700" textAnchor="middle" fill="#222">
          PRE
        </text>
      </svg>
    </Slot>
  </TaskbarRoot>
);

const Watermark = styled.div`
  position: absolute;
  left: 562px;
  top: 931px;
  width: 155px;
  display: flex;
  flex-direction: column;
  align-items: center;
  font-weight: 700;
  color: rgba(120, 120, 120, 0.2);
  .ar {
    height: 47px;
    font: bold 50px/48px "DejaVu Sans", sans-serif;
    transform: scaleX(0.86);
  }
  .en {
    font-size: 23.5px;
    line-height: 24px;
  }
`;

const App = () => (
  <Window>
    <GlobalStyle />
    <Title />
    <TabStrip>
      {tabs.map(([name, ml, w]) => (
        <Tab
          key={name}
          $ml={ml}
          $w={w}
          $active={name === "Home"}
          $green={name === "Table Design"}
        >
          {name}
        </Tab>
      ))}
      <ShareButton>
        <Ico w={12} h={12} c="#217346">
          <path d="M4 3.500H.5v8h9V8M3 8c0-3 2-4.500 5-4.500V1l3.500 3.500L8 8V5.500C6 5.500 4 6 3 8z" />
        </Ico>
        Share
      </ShareButton>
    </TabStrip>
    <Ribbon />
    <FormulaBar>
      <Field $w={102} $ml={5}>
        B8
        <Ico w={7} h={4}>
          <path d="M0 0h7L3.500 4z" fill="#666" stroke="none" />
        </Ico>
      </Field>
      <Grip $ml={14}>
        <i />
      </Grip>
      <FormulaTools $w={110} $ml={14}>
        <Ico w={11} h={10} c="#b4b4b4">
          <path d="M.5 0l10 10M10.500 0l-10 10" strokeWidth="1.500" />
        </Ico>
        <Ico w={13} h={10} c="#b4b4b4">
          <path d="M.5 5.500 4.500 9l8-8.500" strokeWidth="2" />
        </Ico>
        <Fx>
          f<small>x</small>
        </Fx>
      </FormulaTools>
      <FormulaInput $w={1025} $ml={3}>
        <Arabic $x={0.94}>محمد لطفى</Arabic>
        <Ico w={8} h={6} c="#555">
          <path d="M.5.5 4 4.500 7.500.5" strokeWidth="1.800" />
        </Ico>
      </FormulaInput>
    </FormulaBar>
    <Sheet />
    <BottomTabs />
    <Status />
    <Taskbar />
    <Watermark>
      <div className="ar">مستقل</div>
      <div className="en">mostaql.com</div>
    </Watermark>
  </Window>
);

export default App;
